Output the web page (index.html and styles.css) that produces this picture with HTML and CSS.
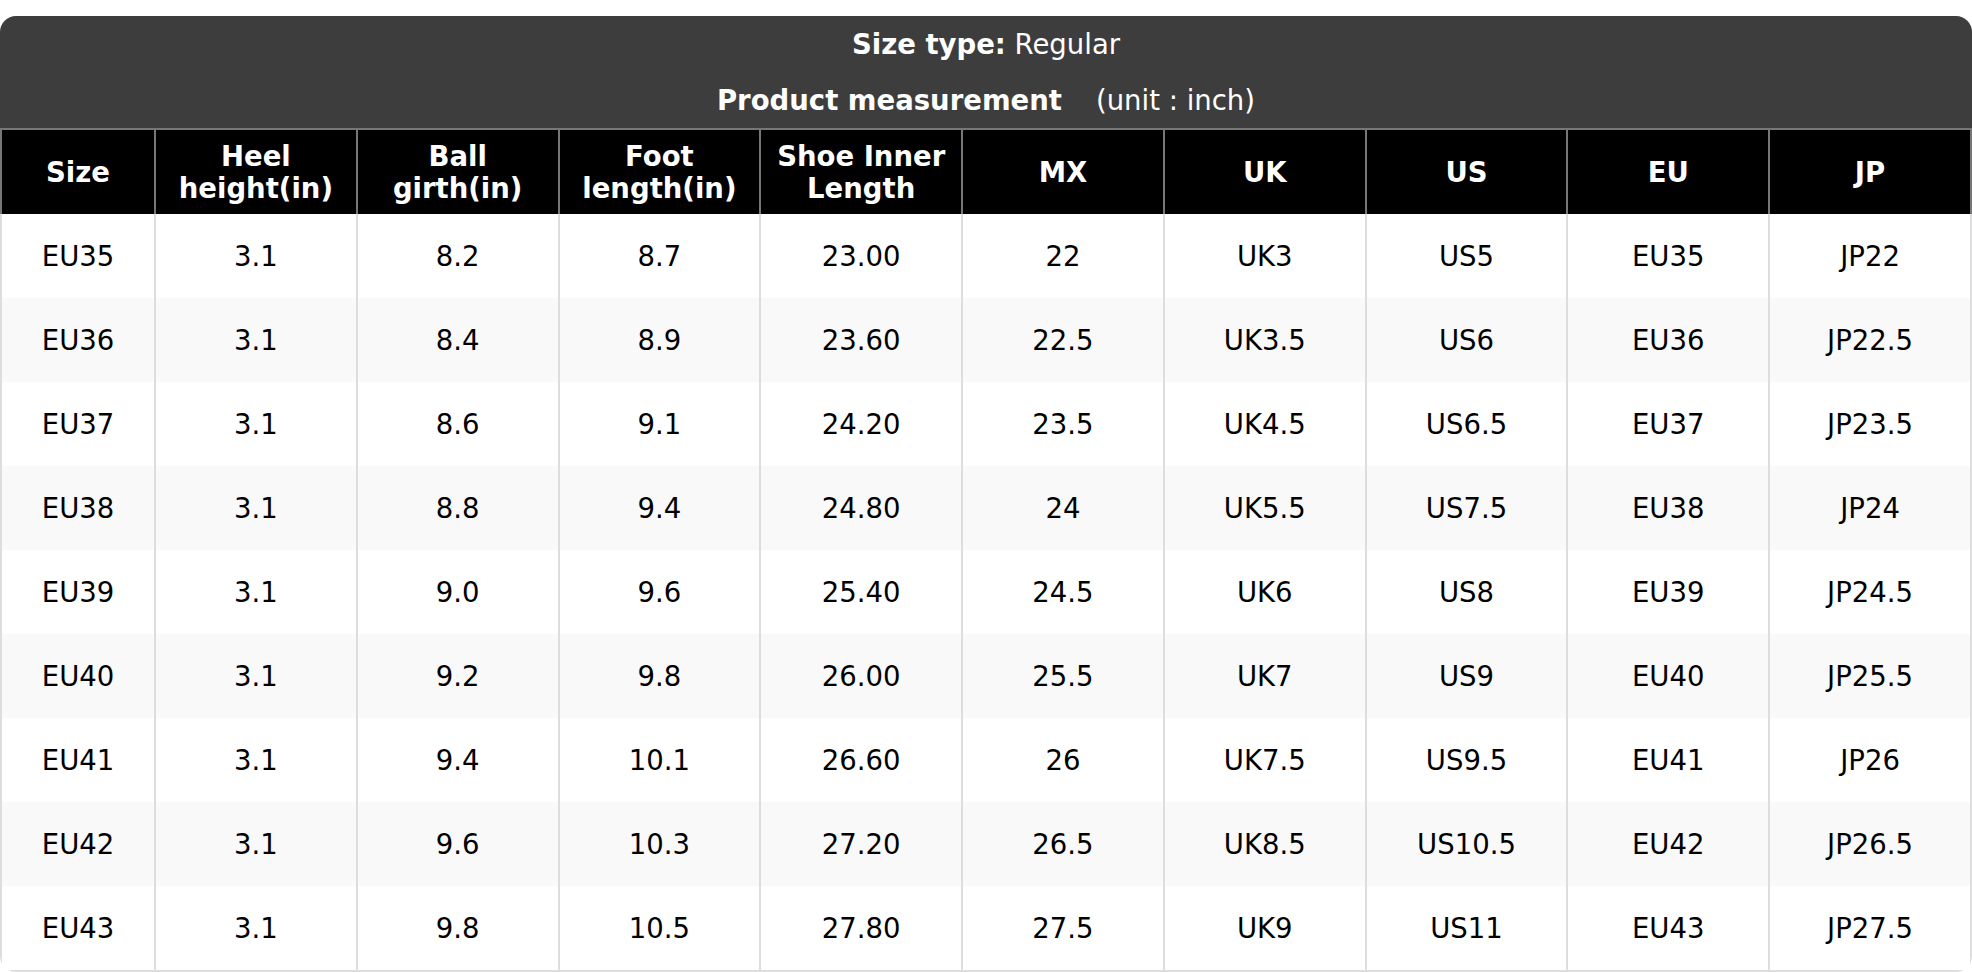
FILE: index.html
```html
<!DOCTYPE html>
<html>
<head>
<meta charset="utf-8">
<link rel="stylesheet" href="styles.css">
</head>
<body>
<div class="chart">
  <div class="title">
    <div class="title-line"><b>Size type:</b> Regular</div>
    <div class="title-line"><b>Product measurement</b><span class="unit">(unit : inch)</span></div>
  </div>
  <table class="sizes">
    <colgroup>
      <col class="c-first"><col><col><col><col><col><col><col><col><col>
    </colgroup>
    <thead>
      <tr>
        <th>Size</th><th>Heel<br>height(in)</th><th>Ball<br>girth(in)</th><th>Foot<br>length(in)</th><th>Shoe Inner<br>Length</th><th>MX</th><th>UK</th><th>US</th><th>EU</th><th>JP</th>
      </tr>
    </thead>
    <tbody>
      <tr><td>EU35</td><td>3.1</td><td>8.2</td><td>8.7</td><td>23.00</td><td>22</td><td>UK3</td><td>US5</td><td>EU35</td><td>JP22</td></tr>
      <tr><td>EU36</td><td>3.1</td><td>8.4</td><td>8.9</td><td>23.60</td><td>22.5</td><td>UK3.5</td><td>US6</td><td>EU36</td><td>JP22.5</td></tr>
      <tr><td>EU37</td><td>3.1</td><td>8.6</td><td>9.1</td><td>24.20</td><td>23.5</td><td>UK4.5</td><td>US6.5</td><td>EU37</td><td>JP23.5</td></tr>
      <tr><td>EU38</td><td>3.1</td><td>8.8</td><td>9.4</td><td>24.80</td><td>24</td><td>UK5.5</td><td>US7.5</td><td>EU38</td><td>JP24</td></tr>
      <tr><td>EU39</td><td>3.1</td><td>9.0</td><td>9.6</td><td>25.40</td><td>24.5</td><td>UK6</td><td>US8</td><td>EU39</td><td>JP24.5</td></tr>
      <tr><td>EU40</td><td>3.1</td><td>9.2</td><td>9.8</td><td>26.00</td><td>25.5</td><td>UK7</td><td>US9</td><td>EU40</td><td>JP25.5</td></tr>
      <tr><td>EU41</td><td>3.1</td><td>9.4</td><td>10.1</td><td>26.60</td><td>26</td><td>UK7.5</td><td>US9.5</td><td>EU41</td><td>JP26</td></tr>
      <tr><td>EU42</td><td>3.1</td><td>9.6</td><td>10.3</td><td>27.20</td><td>26.5</td><td>UK8.5</td><td>US10.5</td><td>EU42</td><td>JP26.5</td></tr>
      <tr><td>EU43</td><td>3.1</td><td>9.8</td><td>10.5</td><td>27.80</td><td>27.5</td><td>UK9</td><td>US11</td><td>EU43</td><td>JP27.5</td></tr>
    </tbody>
  </table>
</div>
</body>
</html>
```
FILE: styles.css
```css
html, body {
  margin: 0;
  padding: 0;
  background: #ffffff;
}
body {
  font-family: "DejaVu Sans", Verdana, sans-serif;
  font-size: 27.5px;
  color: #000;
}
.chart {
  margin-top: 16px;
  width: 1972px;
  border-radius: 16px;
  overflow: hidden;
}
.title {
  background: #3d3d3d;
  color: #ffffff;
  text-align: center;
}
.title-line {
  line-height: 56px;
  height: 56px;
}
.title-line b {
  font-weight: bold;
}
.unit {
  margin-left: 34px;
}
.sizes {
  width: 100%;
  border-collapse: collapse;
  table-layout: fixed;
}
.c-first {
  width: 154px;
}
.sizes th {
  background: #000;
  color: #fff;
  font-weight: bold;
  line-height: 32.5px;
  height: 85px;
  padding: 0 4px;
  box-sizing: border-box;
  text-align: center;
  vertical-align: middle;
  border: 2px solid #777777;
  border-bottom: none;
}
.sizes td {
  height: 84px;
  padding: 0;
  text-align: center;
  vertical-align: middle;
  border-left: 2px solid #dddddd;
  border-right: 2px solid #dddddd;
}
.sizes tbody tr:last-child td {
  border-bottom: 2px solid #dddddd;
}
.sizes tbody tr:nth-child(even) td {
  background: #f9f9f9;
}
```
